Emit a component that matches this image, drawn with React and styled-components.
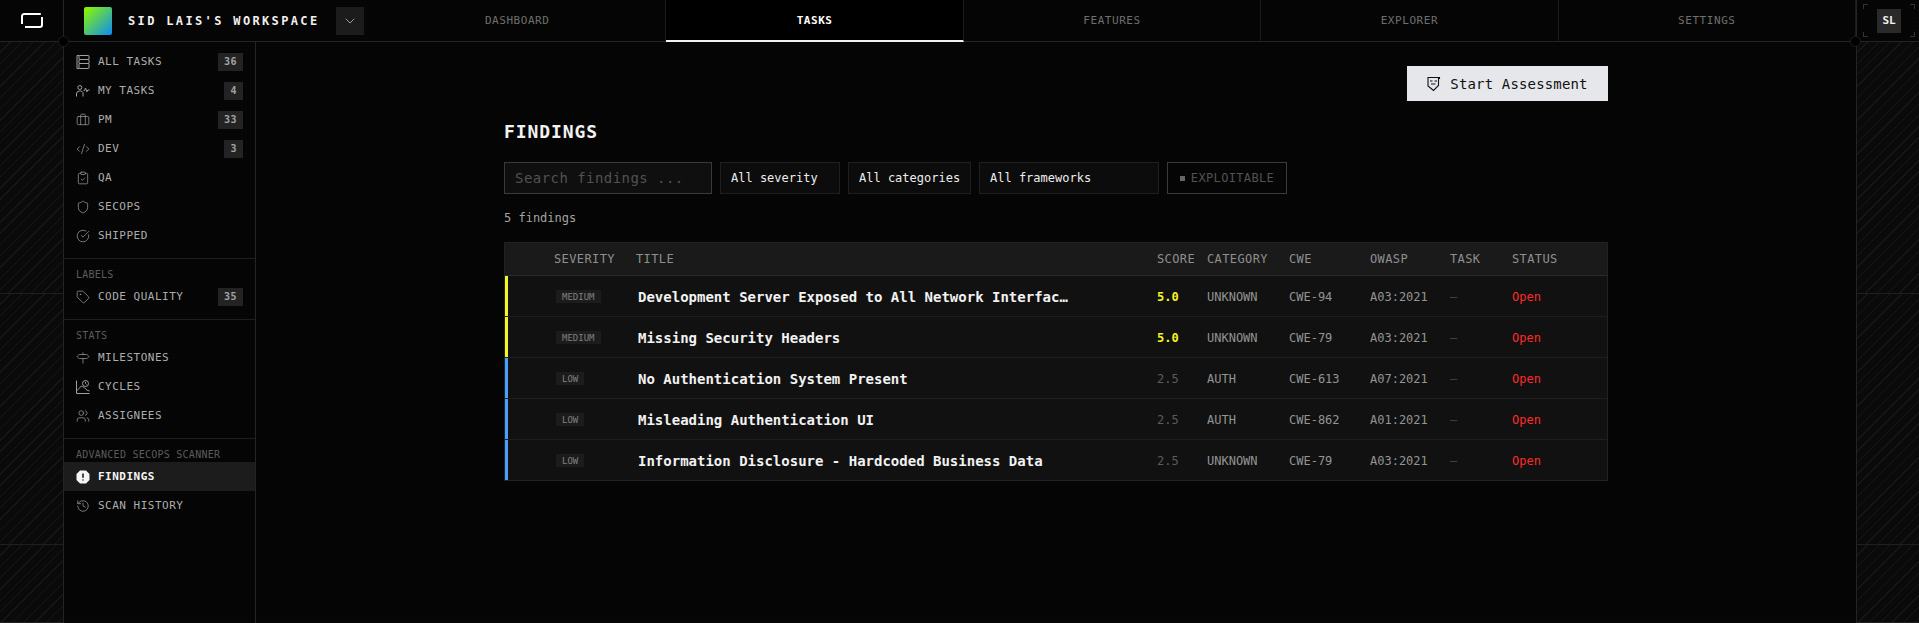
import React from 'react';
import styled, { createGlobalStyle } from 'styled-components';
import {
  Briefcase,
  ChevronDown,
  CircleCheckBig,
  ClipboardCheck,
  CodeXml,
  History,
  Shield,
  Signpost,
  Tag,
  Users,
} from 'lucide-react';

const MONO = `"DejaVu Sans Mono", "Liberation Mono", monospace`;

const GlobalStyle = createGlobalStyle`
  html, body {
    margin: 0;
    height: 100%;
    background: #050505;
    overflow: hidden;
  }
  * { box-sizing: border-box; }
  #root { height: 100%; }
`;

const Page = styled.div`
  position: relative;
  height: 623px;
  display: flex;
  flex-direction: column;
  font-family: ${MONO};
  color: #e5e7eb;
  background-color: #050505;
  background-image: radial-gradient(#070707 1px, transparent 1px);
  background-size: 4px 4px;
`;

const Header = styled.header`
  height: 42px;
  flex: none;
  display: flex;
  border-bottom: 1px solid #242424;
`;

const LogoCell = styled.div`
  width: 64px;
  flex: none;
  display: flex;
  align-items: center;
  justify-content: center;
  border-right: 1px solid #242424;
`;

const Workspace = styled.div`
  width: 305px;
  flex: none;
  display: flex;
  align-items: center;
  padding-left: 20px;
`;

const Avatar = styled.div`
  width: 28px;
  height: 28px;
  border-radius: 2px;
  background: linear-gradient(135deg, #84f00f 10%, #0a8cf5 100%);
`;

const WorkspaceName = styled.span`
  margin-left: 16px;
  width: 208px;
  font-size: 12px;
  font-weight: 700;
  letter-spacing: 2.35px;
  white-space: nowrap;
  color: #f0f0f0;
`;

const Chevron = styled.div`
  width: 28px;
  height: 28px;
  display: flex;
  align-items: center;
  justify-content: center;
  background: #1c1c1c;
  color: #9a9a9a;
`;

const Tabs = styled.nav`
  flex: 1;
  display: grid;
  grid-template-columns: repeat(5, 1fr);
`;

const Tab = styled.div`
  display: flex;
  align-items: center;
  justify-content: center;
  font-size: 11px;
  letter-spacing: 0.55px;
  font-weight: ${(p) => (p.$active ? 700 : 400)};
  color: ${(p) => (p.$active ? '#ffffff' : '#6f6f6f')};
  border-right: 1px solid #1c1c1c;
  border-bottom: 2px solid ${(p) => (p.$active ? '#f2f2f2' : 'transparent')};
  margin-bottom: -1px;
  background: ${(p) => (p.$active ? '#000' : 'transparent')};
`;

const UserCell = styled.div`
  position: relative;
  width: 63px;
  flex: none;
  display: flex;
  align-items: center;
  justify-content: center;
  padding-left: 2px;
  border-left: 1px solid #242424;
`;

const UserBadge = styled.div`
  width: 24px;
  height: 24px;
  display: flex;
  align-items: center;
  justify-content: center;
  background: #2a2a2a;
  font-size: 11px;
  font-weight: 700;
  color: #f4f4f4;
`;

const Bracket = styled.span`
  position: absolute;
  width: 5px;
  height: 5px;
  border: 0 solid #333;
  ${(p) => (p.$top ? 'top: 4px; border-top-width: 1px;' : 'bottom: 4px; border-bottom-width: 1px;')}
  ${(p) => (p.$left ? 'left: 6px; border-left-width: 1px;' : 'right: 4px; border-right-width: 1px;')}
`;

const Junction = styled.span`
  position: absolute;
  top: 36px;
  left: ${(p) => p.$x}px;
  width: 11px;
  height: 11px;
  border-radius: 50%;
  background: #000;
  border: 1px solid #1e1e1e;
`;

const Body = styled.div`
  flex: 1;
  min-height: 0;
  display: flex;
`;

const Rail = styled.div`
  width: ${(p) => p.$w}px;
  flex: none;
  display: flex;
  flex-direction: column;
  border-${(p) => p.$side}: 1px solid #242424;
`;

const RailBlock = styled.div`
  height: ${(p) => p.$h}px;
  flex: none;
  border-bottom: 1px solid #1f1f1f;
  background: repeating-linear-gradient(135deg, #0a0a0a 0 7px, #171717 7px 8px);
`;

const Sidebar = styled.aside`
  width: 192px;
  flex: none;
  border-right: 1px solid #242424;
`;

const Section = styled.div`
  padding: ${(p) => (p.$first ? '5px' : '8px')} 0 8px;
  border-bottom: ${(p) => (p.$last ? 'none' : '1px solid #1e1e1e')};
`;

const SectionLabel = styled.div`
  height: 15px;
  padding-left: 12px;
  font-size: 10px;
  line-height: 15px;
  letter-spacing: 0.25px;
  color: #5c5c5c;
`;

const Item = styled.div`
  height: 29px;
  display: flex;
  align-items: center;
  gap: 8px;
  padding: 0 12px;
  font-size: 11px;
  letter-spacing: 0.5px;
  font-weight: ${(p) => (p.$active ? 700 : 400)};
  color: ${(p) => (p.$active ? '#f5f5f5' : '#adadad')};
  background: ${(p) => (p.$active ? '#1c1c1c' : 'transparent')};

  & svg {
    flex: none;
    color: ${(p) => (p.$active ? '#f5f5f5' : '#a0a0a0')};
  }
`;

const ItemName = styled.span`
  flex: 1;
`;

const Count = styled.span`
  height: 18px;
  min-width: 18px;
  padding: 0 6px;
  display: flex;
  align-items: center;
  justify-content: center;
  background: #232323;
  font-size: 10px;
  font-weight: 700;
  color: #a3a3a3;
`;

const Main = styled.main`
  flex: 1;
  min-width: 0;
  display: flex;
  justify-content: center;
  padding-top: 24px;
`;

const Content = styled.div`
  width: 1104px;
`;

const TopActions = styled.div`
  display: flex;
  justify-content: flex-end;
`;

const PrimaryButton = styled.button`
  width: 201px;
  height: 35px;
  display: flex;
  align-items: center;
  justify-content: center;
  gap: 9px;
  border: 0;
  background: #e5e7eb;
  color: #111;
  font-family: ${MONO};
  font-size: 14px;
  letter-spacing: 0.15px;
`;

const Heading = styled.h1`
  margin: 17px 0 16px;
  font-size: 18px;
  line-height: 28px;
  font-weight: 700;
  letter-spacing: 0.9px;
  color: #f2f2f2;
`;

const Filters = styled.div`
  display: flex;
  gap: 8px;
`;

const Search = styled.input`
  width: 208px;
  height: 32px;
  padding: 0 10px;
  border: 1px solid #3a3a3a;
  background: #0f0f0f;
  font-family: ${MONO};
  font-size: 14px;
  letter-spacing: 0.45px;
  color: #ddd;
  outline: none;

  &::placeholder {
    color: #525252;
  }
`;

const Select = styled.select`
  appearance: none;
  width: ${(p) => p.$w}px;
  height: 32px;
  padding: 0 10px;
  border: 1px solid #1f1f1f;
  border-radius: 0;
  background: #0c0c0c;
  font-family: ${MONO};
  font-size: 12px;
  color: #eee;
`;

const Toggle = styled.button`
  width: 120px;
  height: 32px;
  display: flex;
  align-items: center;
  justify-content: center;
  gap: 6px;
  border: 1px solid #3a3a3a;
  background: transparent;
  font-family: ${MONO};
  font-size: 12px;
  letter-spacing: 0.35px;
  color: #525252;

  &::before {
    content: '';
    width: 5px;
    height: 5px;
    background: #666;
  }
`;

const ResultCount = styled.div`
  margin: 16px 0;
  font-size: 12px;
  line-height: 16px;
  color: #a3a3a3;
`;

const Table = styled.div`
  border: 1px solid #222;
`;

const COLUMNS = '49px 82px 521px 50px 82px 81px 80px 62px 1fr';

const HeadRow = styled.div`
  height: 33px;
  display: grid;
  grid-template-columns: ${COLUMNS};
  align-items: center;
  background: #1a1a1a;
  border-bottom: 1px solid #2a2a2a;
  font-size: 12px;
  letter-spacing: 0.4px;
  color: #8f8f8f;
`;

const Row = styled.div`
  height: ${(p) => (p.$last ? 40 : 41)}px;
  padding-top: 1px;
  display: grid;
  grid-template-columns: ${COLUMNS};
  align-items: center;
  background: #111;
  border-bottom: ${(p) => (p.$last ? 'none' : '1px solid #1e1e1e')};
  box-shadow: inset 3px 0 0 ${(p) => p.$accent};
  font-size: 12px;
  color: #949494;
`;

const SeverityBadge = styled.span`
  justify-self: start;
  margin-left: 2px;
  height: 13px;
  padding: 0 6px;
  display: flex;
  align-items: center;
  background: #1c1c1c;
  font-size: 9px;
  color: #808080;
`;

const Title = styled.span`
  padding-left: 2px;
  max-width: 434px;
  overflow: hidden;
  white-space: nowrap;
  text-overflow: ellipsis;
  font-size: 14px;
  font-weight: 700;
  color: #f2f2f2;
`;

const Score = styled.span`
  font-weight: ${(p) => (p.$high ? 700 : 400)};
  color: ${(p) => (p.$high ? '#f5f521' : '#5c5c5c')};
`;

const Dash = styled.span`
  color: #444;
`;

const Status = styled.span`
  color: #ff2a2a;
`;

const LogoMark = () => (
  <svg width="22" height="15" viewBox="0 0 22 15" fill="none" stroke="#fff" strokeWidth="2">
    <path d="M1 11V3.2A2.2 2.2 0 0 1 3.2 1H19.8" />
    <path d="M21 4V11.8A2.2 2.2 0 0 1 18.8 14H4" />
  </svg>
);

const AllTasksIcon = () => (
  <svg width="14" height="14" viewBox="0 0 14 14" fill="none" stroke="currentColor" strokeWidth="1">
    <path d="M3 .5H1M1 .5v13M3 13.5H1" />
    <rect x="3" y=".5" width="10" height="4" rx=".5" />
    <rect x="3" y="4.5" width="10" height="4" rx=".5" />
    <rect x="3" y="8.5" width="10" height="5" rx=".5" />
  </svg>
);

const MyTasksIcon = () => (
  <svg width="14" height="14" viewBox="0 0 14 14" fill="none" stroke="currentColor" strokeWidth="1">
    <circle cx="3.8" cy="3.5" r="2" />
    <path d="M.5 12.5V10a3 3 0 0 1 3-3h1A3 3 0 0 1 7 8.5V12.5" />
    <path d="M7.5 6.5h1l1-2.5 1.3 4 .9-2h1.8" />
  </svg>
);

const CyclesIcon = () => (
  <svg width="14" height="14" viewBox="0 0 14 14" fill="none" stroke="currentColor" strokeWidth="1">
    <path d="M.5 .5v13h13" />
    <path d="M.5 10.5c3-.5 3-5 6-4s3 4 7 4.5" />
    <circle cx="9.5" cy="3.5" r="3" />
    <path d="M9.5 2v1.5l1 1" />
  </svg>
);

const FindingsIcon = () => (
  <svg width="14" height="14" viewBox="0 0 14 14">
    <path d="M4 .5h6L13.5 4v6L10 13.5H4L.5 10V4z" fill="#f5f5f5" />
    <path d="M7 3.5v4.2M7 9.5v1" stroke="#1c1c1c" strokeWidth="1.6" />
  </svg>
);

const AssessmentIcon = () => (
  <svg width="14" height="16" viewBox="0 0 14 16" fill="none" stroke="#111" strokeWidth="1.1">
    <path d="M1 1.5h10.5v8L6.5 14.5 1 10z" />
    <path d="M3 5h2.5M7.5 5H10M4 8h4.5" />
    <path d="M12.5 1v2" />
  </svg>
);

const mainItems = [
  { name: 'ALL TASKS', icon: <AllTasksIcon />, count: 36 },
  { name: 'MY TASKS', icon: <MyTasksIcon />, count: 4 },
  { name: 'PM', icon: <Briefcase size={14} strokeWidth={1.25} />, count: 33 },
  { name: 'DEV', icon: <CodeXml size={14} strokeWidth={1.25} />, count: 3 },
  { name: 'QA', icon: <ClipboardCheck size={14} strokeWidth={1.25} /> },
  { name: 'SECOPS', icon: <Shield size={14} strokeWidth={1.25} /> },
  { name: 'SHIPPED', icon: <CircleCheckBig size={14} strokeWidth={1.25} /> },
];

const statItems = [
  { name: 'MILESTONES', icon: <Signpost size={14} strokeWidth={1.25} /> },
  { name: 'CYCLES', icon: <CyclesIcon /> },
  { name: 'ASSIGNEES', icon: <Users size={14} strokeWidth={1.25} /> },
];

const tabs = ['DASHBOARD', 'TASKS', 'FEATURES', 'EXPLORER', 'SETTINGS'];

const findings = [
  { severity: 'MEDIUM', title: 'Development Server Exposed to All Network Interfaces', score: '5.0', category: 'UNKNOWN', cwe: 'CWE-94', owasp: 'A03:2021' },
  { severity: 'MEDIUM', title: 'Missing Security Headers', score: '5.0', category: 'UNKNOWN', cwe: 'CWE-79', owasp: 'A03:2021' },
  { severity: 'LOW', title: 'No Authentication System Present', score: '2.5', category: 'AUTH', cwe: 'CWE-613', owasp: 'A07:2021' },
  { severity: 'LOW', title: 'Misleading Authentication UI', score: '2.5', category: 'AUTH', cwe: 'CWE-862', owasp: 'A01:2021' },
  { severity: 'LOW', title: 'Information Disclosure - Hardcoded Business Data', score: '2.5', category: 'UNKNOWN', cwe: 'CWE-79', owasp: 'A03:2021' },
];

const NavItem = ({ item, active }) => (
  <Item $active={active}>
    {item.icon}
    <ItemName>{item.name}</ItemName>
    {item.count !== undefined && <Count>{item.count}</Count>}
  </Item>
);

const RailColumn = ({ side, width }) => (
  <Rail $side={side} $w={width}>
    <RailBlock $h={252} />
    <RailBlock $h={251} />
    <RailBlock $h={78} />
  </Rail>
);

export default function App() {
  return (
    <Page>
      <GlobalStyle />
      <Header>
        <LogoCell>
          <LogoMark />
        </LogoCell>
        <Workspace>
          <Avatar />
          <WorkspaceName>SID LAIS'S WORKSPACE</WorkspaceName>
          <Chevron>
            <ChevronDown size={16} strokeWidth={1.5} />
          </Chevron>
        </Workspace>
        <Tabs>
          {tabs.map((tab) => (
            <Tab key={tab} $active={tab === 'TASKS'}>
              {tab}
            </Tab>
          ))}
        </Tabs>
        <UserCell>
          <Bracket $top $left />
          <Bracket $top />
          <Bracket $left />
          <Bracket />
          <UserBadge>SL</UserBadge>
        </UserCell>
      </Header>
      <Junction $x={58} />
      <Junction $x={1850} />

      <Body>
        <RailColumn side="right" width={64} />
        <Sidebar>
          <Section $first>
            {mainItems.map((item) => (
              <NavItem key={item.name} item={item} />
            ))}
          </Section>
          <Section>
            <SectionLabel>LABELS</SectionLabel>
            <NavItem item={{ name: 'CODE QUALITY', icon: <Tag size={14} strokeWidth={1.25} />, count: 35 }} />
          </Section>
          <Section>
            <SectionLabel>STATS</SectionLabel>
            {statItems.map((item) => (
              <NavItem key={item.name} item={item} />
            ))}
          </Section>
          <Section $last>
            <SectionLabel>ADVANCED SECOPS SCANNER</SectionLabel>
            <NavItem active item={{ name: 'FINDINGS', icon: <FindingsIcon /> }} />
            <NavItem item={{ name: 'SCAN HISTORY', icon: <History size={14} strokeWidth={1.25} /> }} />
          </Section>
        </Sidebar>

        <Main>
          <Content>
            <TopActions>
              <PrimaryButton>
                <AssessmentIcon />
                Start Assessment
              </PrimaryButton>
            </TopActions>
            <Heading>FINDINGS</Heading>
            <Filters>
              <Search placeholder="Search findings ..." />
              <Select $w={120}>
                <option>All severity</option>
              </Select>
              <Select $w={123}>
                <option>All categories</option>
              </Select>
              <Select $w={180}>
                <option>All frameworks</option>
              </Select>
              <Toggle>EXPLOITABLE</Toggle>
            </Filters>
            <ResultCount>5 findings</ResultCount>
            <Table>
              <HeadRow>
                <span />
                <span>SEVERITY</span>
                <span>TITLE</span>
                <span>SCORE</span>
                <span>CATEGORY</span>
                <span>CWE</span>
                <span>OWASP</span>
                <span>TASK</span>
                <span>STATUS</span>
              </HeadRow>
              {findings.map((f, i) => (
                <Row key={f.title} $accent={f.severity === 'MEDIUM' ? '#f5f521' : '#4a9eff'} $last={i === findings.length - 1}>
                  <span />
                  <SeverityBadge>{f.severity}</SeverityBadge>
                  <Title>{f.title}</Title>
                  <Score $high={f.severity === 'MEDIUM'}>{f.score}</Score>
                  <span>{f.category}</span>
                  <span>{f.cwe}</span>
                  <span>{f.owasp}</span>
                  <Dash>—</Dash>
                  <Status>Open</Status>
                </Row>
              ))}
            </Table>
          </Content>
        </Main>

        <RailColumn side="left" width={63} />
      </Body>
    </Page>
  );
}
